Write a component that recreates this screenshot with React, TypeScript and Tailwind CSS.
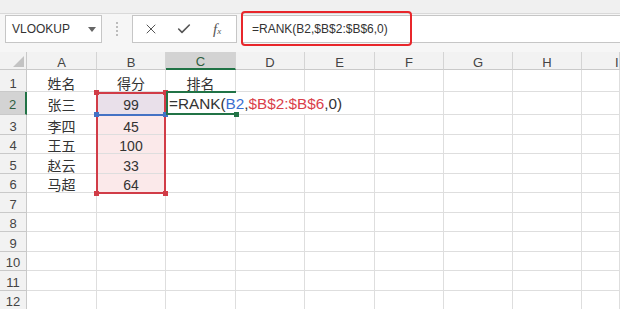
import { Check, X } from "lucide-react";

const font = { fontFamily: '"Liberation Sans", "Noto Sans CJK SC", sans-serif' };

// column widths in px, the last one takes the rest
const colW = [70, 69, 70, 69, 70, 69, 69, 69];
const letters = ["A", "B", "C", "D", "E", "F", "G", "H", "I"];
const rowH = [22, 23, 19.5, 19.5, 19.5, 19.5, 19.5, 19.5, 19.5, 19.5, 19.5, 19.5];

const data: Record<number, string[]> = {
  1: ["姓名", "得分", "排名"],
  2: ["张三", "99"],
  3: ["李四", "45"],
  4: ["王五", "100"],
  5: ["赵云", "33"],
  6: ["马超", "64"],
};

const Formula = () => (
  <>
    <span>=RANK(</span>
    <span className="text-[#3b6fd0]">B2</span>
    <span>,</span>
    <span className="text-[#d9404a]">$B$2:$B$6</span>
    <span>,0)</span>
  </>
);

const Toolbar = () => (
  <div className="relative flex h-[38px] items-start bg-[#f6f6f6] pl-[5px] pt-[1px]">
    <div className="flex h-[28px] w-[97px] items-center justify-between border border-[#c6c6c6] bg-white pl-[6px] pr-[5px]">
      <span className="text-[12px] text-[#333]">VLOOKUP</span>
      <span className="h-0 w-0 border-x-[4px] border-t-[5px] border-x-transparent border-t-[#666]" />
    </div>
    <div className="flex h-[28px] w-[30px] flex-col items-center justify-center gap-[2px]">
      <span className="h-[2px] w-[2px] rounded-full bg-[#a8a8a8]" />
      <span className="h-[2px] w-[2px] rounded-full bg-[#a8a8a8]" />
      <span className="h-[2px] w-[2px] rounded-full bg-[#a8a8a8]" />
      <span className="h-[2px] w-[2px] rounded-full bg-[#a8a8a8]" />
    </div>
    <div className="flex h-[28px] w-[105px] items-center border border-[#c6c6c6] bg-white pl-[10px] text-[#555]">
      <X size={16} strokeWidth={1.5} />
      <Check size={16} strokeWidth={2.4} className="ml-[17px]" />
      <span className="ml-[21px] text-[15px] italic" style={{ fontFamily: '"Liberation Serif", serif' }}>
        f<span className="text-[9px]">x</span>
      </span>
    </div>
    <div className="ml-[4px] flex h-[28px] flex-1 items-center border border-r-0 border-[#c6c6c6] bg-white pl-[10px] text-[12px] text-[#333]">
      =RANK(B2,$B$2:$B$6,0)
    </div>
    {/* red annotation box */}
    <div className="absolute left-[241px] top-[-3px] h-[35px] w-[171px] rounded-[4px] border-[2.5px] border-[#e8262b]" />
  </div>
);

const HeaderRow = () => (
  <div className="flex h-[18px] bg-[#f2f2f2] text-[13px] leading-[12px] text-[#444]">
    <div className="relative w-[27px] border-r border-b border-[#c9c9c9]">
      <svg className="absolute bottom-[2px] right-[2px]" width="11" height="11" viewBox="0 0 11 11">
        <polygon points="11,0 11,11 0,11" fill="#c3c3c3" />
      </svg>
    </div>
    {letters.map((l, i) => (
      <div
        key={l}
        className={`flex items-end justify-center border-r border-[#d4d4d4] ${
          i === 2 ? "border-b-2 border-b-[#217346] bg-[#d3d3d3] text-[#2f5e3f]" : "border-b border-b-[#c9c9c9]"
        } ${i === 8 ? "flex-1 justify-start pl-[33px]" : ""}`}
        style={i < 8 ? { width: colW[i] } : undefined}
      >
        {l}
      </div>
    ))}
  </div>
);

const Row = ({ r }: { r: number }) => {
  const cells = data[r] ?? [];
  const pad = r === 2 ? "pb-[2px]" : "pb-0";
  return (
    <div className="flex" style={{ height: rowH[r - 1] }}>
      <div
        className={`flex w-[27px] items-end justify-center border-b border-[#c9c9c9] text-[13px] leading-[14px] ${pad} ${
          r === 2 ? "border-r-2 border-r-[#217346] bg-[#d3d3d3] text-[#2f5e3f]" : "border-r border-r-[#c9c9c9] bg-[#f2f2f2] text-[#444]"
        }`}
      >
        {r}
      </div>
      {colW.concat([0]).map((w, i) => {
        const hideRight = r === 2 && (i === 2 || i === 3);
        return (
          <div
            key={i}
            className={`relative flex items-end justify-center border-b border-[#dedede] text-[14px] leading-[14px] text-[#333] ${pad} ${
              hideRight ? "" : "border-r"
            } ${i === 8 ? "flex-1" : ""} ${r >= 2 && r <= 6 && i === 1 ? (r === 2 ? "bg-[#e9e0ea]" : "bg-[#fbe9ea]") : ""}`}
            style={i < 8 ? { width: w } : undefined}
          >
            {r === 2 && i === 2 ? (
              <span className="absolute left-[3px] top-[2px] z-10 whitespace-nowrap text-[15.3px] leading-[20px] text-[#333]">
                <Formula />
              </span>
            ) : (
              cells[i] ?? ""
            )}
          </div>
        );
      })}
    </div>
  );
};

const Handle = ({ cls, color }: { cls: string; color: string }) => (
  <span className={`absolute h-[5px] w-[5px] ${cls} ${color}`} />
);

export default function App() {
  return (
    <div className="h-[309px] w-[620px] overflow-hidden bg-white" style={font}>
      <div className="h-[14px] border-b border-[#d9d9d9] bg-[#f0f0f0]" />
      <Toolbar />
      <div className="relative">
        <HeaderRow />
        {rowH.map((_, i) => (
          <Row key={i} r={i + 1} />
        ))}
        {/* range B2:B6 */}
        <div className="pointer-events-none absolute left-[96px] top-[40px] h-[102px] w-[70px] border-2 border-[#d13c47]">
          <Handle cls="left-[-4px] top-[-4px]" color="bg-[#d13c47]" />
          <Handle cls="right-[-4px] top-[-4px]" color="bg-[#d13c47]" />
          <Handle cls="left-[-4px] bottom-[-4px]" color="bg-[#d13c47]" />
          <Handle cls="right-[-4px] bottom-[-4px]" color="bg-[#d13c47]" />
        </div>
        {/* reference B2 */}
        <div className="pointer-events-none absolute left-[96px] top-[62px] h-[2px] w-[70px] bg-[#4472c4]">
          <Handle cls="left-[-2px] top-[-2px]" color="bg-[#4472c4]" />
          <Handle cls="right-[-2px] top-[-2px]" color="bg-[#4472c4]" />
        </div>
        {/* active cell C2 */}
        <div className="pointer-events-none absolute left-[166px] top-[39px] h-[24px] w-[70px] border-t-2 border-b-2 border-l-2 border-[#217346]">
          <Handle cls="right-[-3px] bottom-[-4px]" color="bg-[#217346]" />
        </div>
      </div>
    </div>
  );
}
